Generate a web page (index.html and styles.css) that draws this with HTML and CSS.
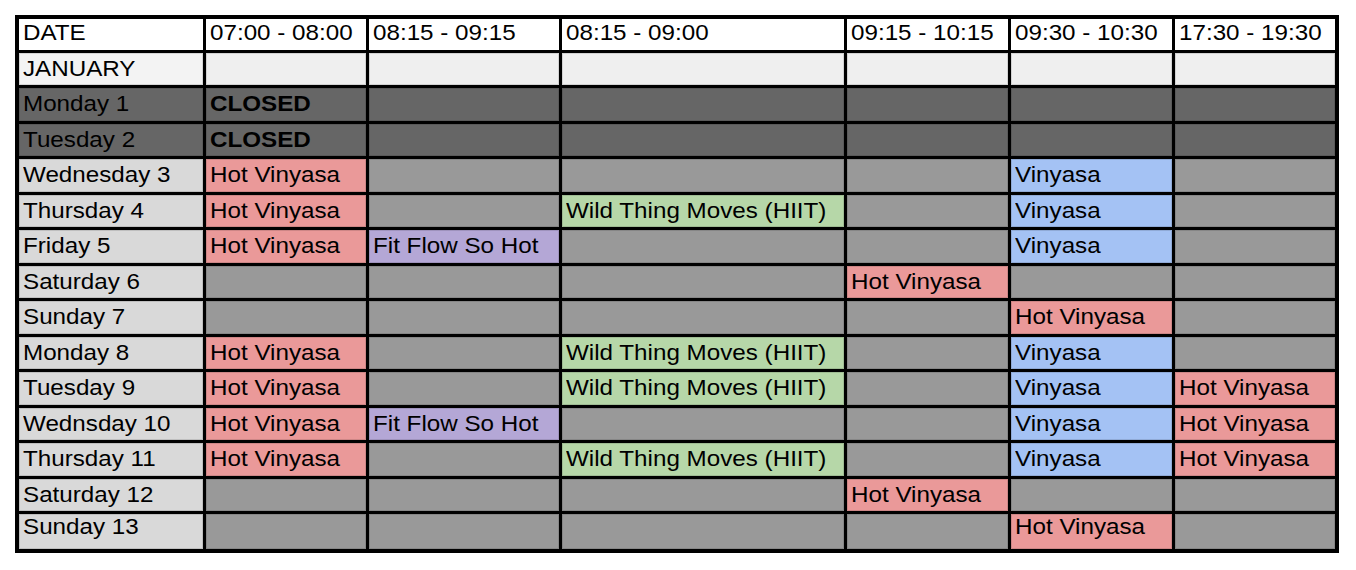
FILE: index.html
```html
<!DOCTYPE html>
<html lang="en">
<head>
<meta charset="utf-8">
<title>January Timetable</title>
<link rel="stylesheet" href="styles.css">
</head>
<body>
<div class="sheet" role="table">
  <div class="c head"><span>DATE</span></div>
  <div class="c head"><span>07:00 - 08:00</span></div>
  <div class="c head"><span>08:15 - 09:15</span></div>
  <div class="c head"><span>08:15 - 09:00</span></div>
  <div class="c head"><span>09:15 - 10:15</span></div>
  <div class="c head"><span>09:30 - 10:30</span></div>
  <div class="c head"><span>17:30 - 19:30</span></div>

  <div class="c month-label"><span>JANUARY</span></div>
  <div class="c month"></div><div class="c month"></div><div class="c month"></div><div class="c month"></div><div class="c month"></div><div class="c month"></div>

  <div class="c closed"><span>Monday 1</span></div>
  <div class="c closed"><span class="b">CLOSED</span></div>
  <div class="c closed"></div><div class="c closed"></div><div class="c closed"></div><div class="c closed"></div><div class="c closed"></div>

  <div class="c closed"><span>Tuesday 2</span></div>
  <div class="c closed"><span class="b">CLOSED</span></div>
  <div class="c closed"></div><div class="c closed"></div><div class="c closed"></div><div class="c closed"></div><div class="c closed"></div>

  <div class="c day"><span>Wednesday 3</span></div>
  <div class="c hot"><span>Hot Vinyasa</span></div>
  <div class="c e"></div><div class="c e"></div><div class="c e"></div>
  <div class="c vin"><span>Vinyasa</span></div>
  <div class="c e"></div>

  <div class="c day"><span>Thursday 4</span></div>
  <div class="c hot"><span>Hot Vinyasa</span></div>
  <div class="c e"></div>
  <div class="c wild"><span>Wild Thing Moves (HIIT)</span></div>
  <div class="c e"></div>
  <div class="c vin"><span>Vinyasa</span></div>
  <div class="c e"></div>

  <div class="c day"><span>Friday 5</span></div>
  <div class="c hot"><span>Hot Vinyasa</span></div>
  <div class="c fit"><span>Fit Flow So Hot</span></div>
  <div class="c e"></div><div class="c e"></div>
  <div class="c vin"><span>Vinyasa</span></div>
  <div class="c e"></div>

  <div class="c day"><span>Saturday 6</span></div>
  <div class="c e"></div><div class="c e"></div><div class="c e"></div>
  <div class="c hot"><span>Hot Vinyasa</span></div>
  <div class="c e"></div><div class="c e"></div>

  <div class="c day"><span>Sunday 7</span></div>
  <div class="c e"></div><div class="c e"></div><div class="c e"></div><div class="c e"></div>
  <div class="c hot"><span>Hot Vinyasa</span></div>
  <div class="c e"></div>

  <div class="c day"><span>Monday 8</span></div>
  <div class="c hot"><span>Hot Vinyasa</span></div>
  <div class="c e"></div>
  <div class="c wild"><span>Wild Thing Moves (HIIT)</span></div>
  <div class="c e"></div>
  <div class="c vin"><span>Vinyasa</span></div>
  <div class="c e"></div>

  <div class="c day"><span>Tuesday 9</span></div>
  <div class="c hot"><span>Hot Vinyasa</span></div>
  <div class="c e"></div>
  <div class="c wild"><span>Wild Thing Moves (HIIT)</span></div>
  <div class="c e"></div>
  <div class="c vin"><span>Vinyasa</span></div>
  <div class="c hot"><span>Hot Vinyasa</span></div>

  <div class="c day"><span>Wednsday 10</span></div>
  <div class="c hot"><span>Hot Vinyasa</span></div>
  <div class="c fit"><span>Fit Flow So Hot</span></div>
  <div class="c e"></div><div class="c e"></div>
  <div class="c vin"><span>Vinyasa</span></div>
  <div class="c hot"><span>Hot Vinyasa</span></div>

  <div class="c day"><span>Thursday 11</span></div>
  <div class="c hot"><span>Hot Vinyasa</span></div>
  <div class="c e"></div>
  <div class="c wild"><span>Wild Thing Moves (HIIT)</span></div>
  <div class="c e"></div>
  <div class="c vin"><span>Vinyasa</span></div>
  <div class="c hot"><span>Hot Vinyasa</span></div>

  <div class="c day"><span>Saturday 12</span></div>
  <div class="c e"></div><div class="c e"></div><div class="c e"></div>
  <div class="c hot"><span>Hot Vinyasa</span></div>
  <div class="c e"></div><div class="c e"></div>

  <div class="c day last"><span>Sunday 13</span></div>
  <div class="c e last"></div><div class="c e last"></div><div class="c e last"></div><div class="c e last"></div>
  <div class="c hot last"><span>Hot Vinyasa</span></div>
  <div class="c e last"></div>
</div>
</body>
</html>
```

FILE: styles.css
```css
html, body {
  margin: 0;
  padding: 0;
  background: #ffffff;
}

body {
  padding: 15px 0 0 15px;
  font-family: "Liberation Sans", Arial, sans-serif;
  font-size: 22px;
  color: #000000;
}

.sheet {
  display: grid;
  width: max-content;
  grid-template-columns: 184px 160px 190px 282px 161px 161px 160px;
  grid-template-rows: 30.5px repeat(13, 32.5px) 34.5px;
  gap: 3px;
  padding: 4px;
  background: #000000;
}

.c {
  display: flex;
  align-items: center;
  padding: 0 3px 0 4px;
  overflow: hidden;
  white-space: nowrap;
  box-shadow: inset 0 0 0 1px rgba(0, 0, 0, 0.12);
}

.c span {
  display: inline-block;
  transform: scaleX(1.1);
  transform-origin: left center;
  line-height: 1;
}

.c .b {
  font-weight: bold;
}

.head {
  background: #ffffff;
  padding-bottom: 3px;
  box-shadow: none;
}

.month-label {
  background: #f3f3f3;
}

.month {
  background: #efefef;
}

.closed {
  background: #666666;
}

.day {
  background: #d9d9d9;
}

.e {
  background: #999999;
}

.hot {
  background: #ea9999;
}

.vin {
  background: #a4c2f4;
}

.wild {
  background: #b6d7a8;
}

.fit {
  background: #b4a7d6;
}

.last {
  padding-bottom: 8px;
}
```
